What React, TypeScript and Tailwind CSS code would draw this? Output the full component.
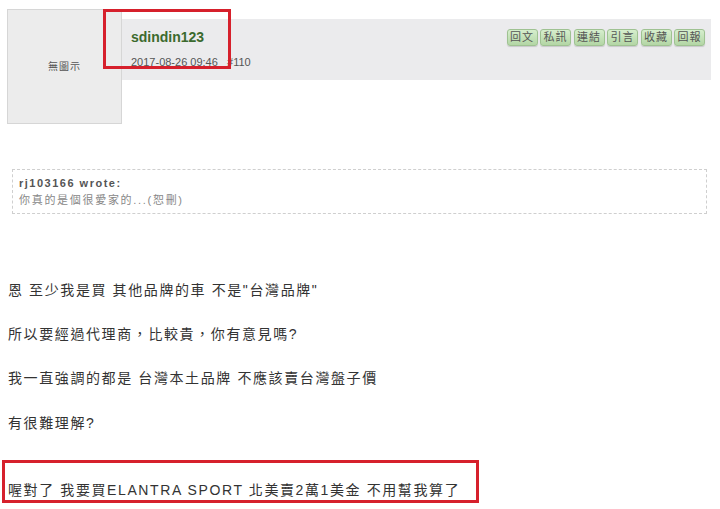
import React from "react";

const cjk = { fontFamily: '"Liberation Sans", "Noto Sans CJK TC", Arial, sans-serif' };

const buttons = ["回文", "私訊", "連結", "引言", "收藏", "回報"];

export default function App() {
  return (
    <div className="relative w-[720px] h-[509px] bg-white overflow-hidden text-[#333]" style={cjk}>
      {/* header row */}
      <div className="flex items-start">
        <div className="ml-[7px] mt-[9px] w-[115px] h-[115px] shrink-0 border border-[#d6d6d6] bg-[#ececec] flex items-center justify-center text-[10px] tracking-[1px] text-[#555]">
          無圖示
        </div>
        <div className="mt-[19px] w-[589px] h-[61px] bg-[#ebebed] flex justify-between pl-[9px] pr-[6px]">
          <div className="flex flex-col">
            <div className="mt-[9px] text-[14px] leading-[18px] font-bold text-[#3b6a2e]">sdindin123</div>
            <div className="mt-[9px] text-[11px] leading-[14px] text-[#555]">
              2017-08-26 09:46&nbsp;&nbsp;&nbsp;#110
            </div>
          </div>
          <div className="mt-[10px] flex gap-[2.5px] h-[17px]">
            {buttons.map((b) => (
              <div
                key={b}
                className="w-[31px] h-[17px] rounded-[3px] border border-[#9fc292] bg-gradient-to-b from-[#d6eecd] to-[#b3d6a5] shadow-[0_1px_1px_rgba(0,0,0,0.15)] flex items-center justify-center text-[11px] leading-none tracking-[1px] text-[#555]"
              >
                {b}
              </div>
            ))}
          </div>
        </div>
      </div>

      {/* quote */}
      <div className="ml-[12px] mt-[45px] w-[695px] h-[45px] border border-dashed border-[#cfcfcf] pl-[6px] pt-[6px]">
        <div className="text-[11px] leading-[15px] font-bold tracking-[1.5px] text-[#555]">rj103166 wrote:</div>
        <div className="mt-[2px] text-[11px] leading-[15px] tracking-[1.7px] text-[#888]">你真的是個很愛家的...(恕刪)</div>
      </div>

      {/* body */}
      <div className="pl-[8px] mt-[66px] text-[14px] leading-[20px] tracking-[1.6px] text-[#333]">
        <p>恩 至少我是買 其他品牌的車 不是"台灣品牌"</p>
        <p className="mt-[24px]">所以要經過代理商，比較貴，你有意見嗎?</p>
        <p className="mt-[24px]">我一直強調的都是 台灣本土品牌 不應該賣台灣盤子價</p>
        <p className="mt-[25px]">有很難理解?</p>
        <p className="mt-[47px]">喔對了 我要買ELANTRA SPORT 北美賣2萬1美金 不用幫我算了</p>
      </div>

      {/* annotation boxes */}
      <div className="absolute left-[103px] top-[9px] w-[128px] h-[60px] border-[3px] border-[#d6202c]" />
      <div className="absolute left-[2px] top-[460px] w-[477px] h-[43px] border-[3px] border-[#d6202c]" />
    </div>
  );
}
